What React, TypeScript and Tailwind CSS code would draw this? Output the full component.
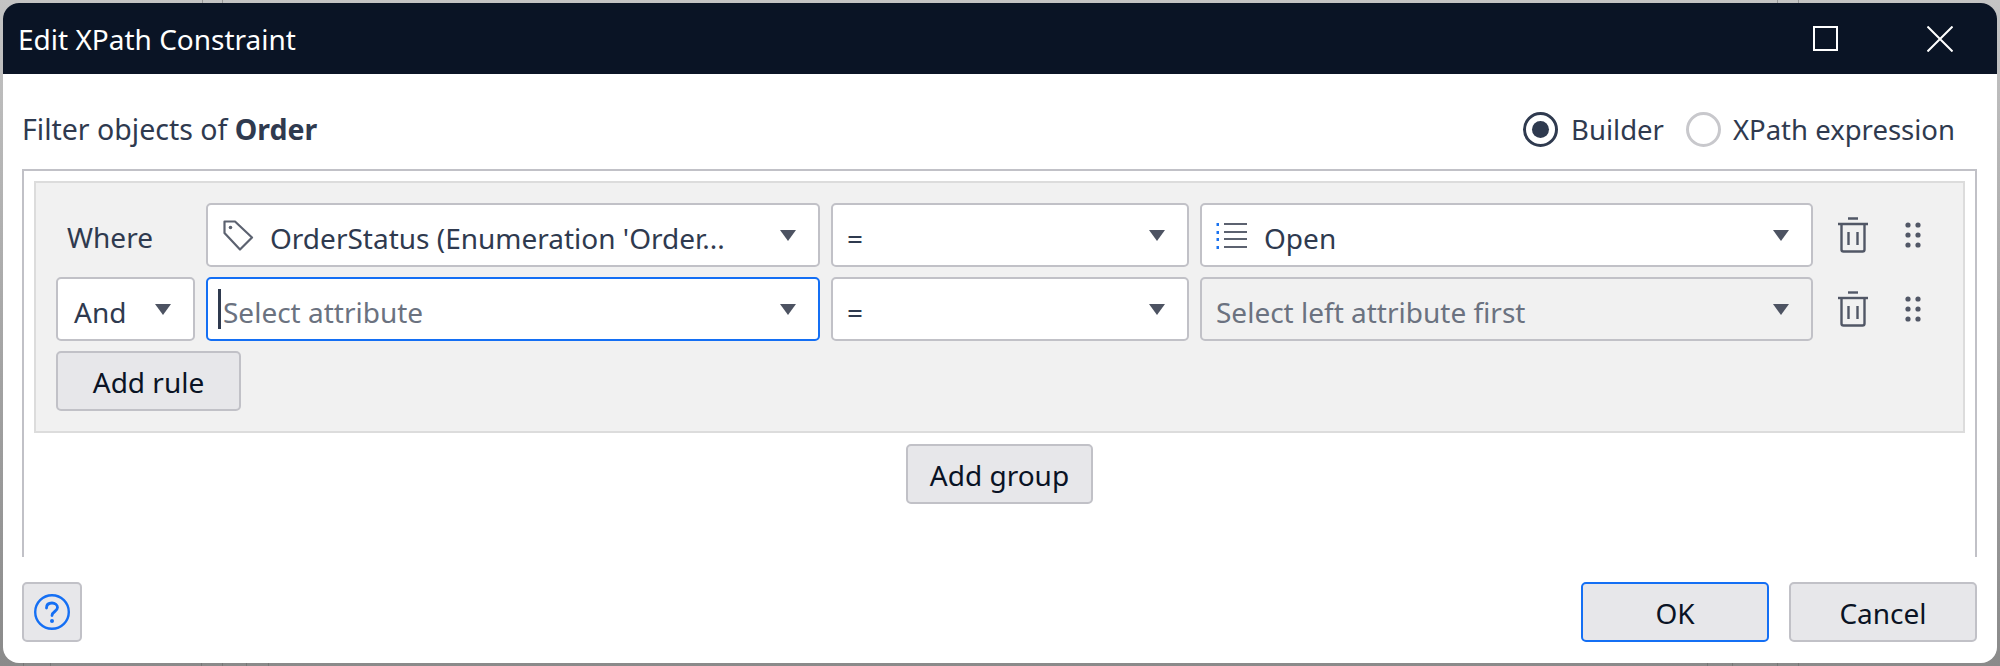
import type { ReactNode } from 'react';

const TOP_TICKS = [202, 222, 1777, 1798];
const BOTTOM_TICKS = [23, 50, 201, 222, 246, 268, 1707, 1732, 1777, 1798];

function Caret() {
    return (
        <svg width="16" height="11" viewBox="0 0 16 11" className="shrink-0">
            <path d="M0 0H16L8 11Z" fill="#4d5362" />
        </svg>
    );
}

function TagIcon() {
    return (
        <svg width="32" height="32" viewBox="0 0 32 32" fill="none" stroke="#5c6270" strokeWidth="2.2" className="shrink-0">
            <path d="M2.5 2.5H13L30 18.5L18 30.5L2.5 14Z" strokeLinejoin="round" />
            <circle cx="8.5" cy="8.5" r="1.8" fill="#5c6270" stroke="none" />
        </svg>
    );
}

function ListIcon() {
    return (
        <svg width="32" height="28" viewBox="0 0 32 28" className="shrink-0">
            <g fill="#1a73f0">
                <rect x="0.5" y="2" width="2.5" height="3" />
                <rect x="0.5" y="10" width="2.5" height="3" />
                <rect x="0.5" y="17" width="2.5" height="3" />
                <rect x="0.5" y="25" width="2.5" height="3" />
            </g>
            <g fill="#5c6270">
                <rect x="8" y="2" width="23" height="2" />
                <rect x="8" y="10" width="23" height="2" />
                <rect x="8" y="17" width="23" height="2" />
                <rect x="8" y="25" width="23" height="2" />
            </g>
        </svg>
    );
}

function TrashIcon() {
    return (
        <svg width="30" height="36" viewBox="0 0 30 36" fill="none" stroke="#515766" strokeWidth="2.4" className="shrink-0">
            <path d="M10 1.5H20" />
            <path d="M0 7H30" />
            <path d="M3.5 7V32.5Q3.5 34.5 5.5 34.5H24.5Q26.5 34.5 26.5 32.5V7" />
            <path d="M10.5 15V28M19.5 15V28" />
        </svg>
    );
}

function GripIcon() {
    return (
        <svg width="16" height="26" viewBox="0 0 16 26" fill="#515766" className="shrink-0">
            <circle cx="3" cy="3" r="2.6" />
            <circle cx="13" cy="3" r="2.6" />
            <circle cx="3" cy="13" r="2.6" />
            <circle cx="13" cy="13" r="2.6" />
            <circle cx="3" cy="23" r="2.6" />
            <circle cx="13" cy="23" r="2.6" />
        </svg>
    );
}

function Select({ width, children, variant = 'default' }: { width: string; children: ReactNode; variant?: 'default' | 'focus' | 'disabled' }) {
    const tone =
        variant === 'focus'
            ? 'border-[#146ff4] bg-white'
            : variant === 'disabled'
              ? 'border-[#c1c1c7] bg-[#f1f1f1]'
              : 'border-[#c1c1c7] bg-white';
    return (
        <div className={`${width} ${tone} flex h-[64px] shrink-0 items-center justify-between rounded-[5px] border-2 pr-[22px]`}>
            <div className="flex min-w-0 items-center">{children}</div>
            <Caret />
        </div>
    );
}

function Button({ width, children, focus }: { width: string; children: ReactNode; focus?: boolean }) {
    return (
        <button className={`${width} ${focus ? 'border-[#146ff4]' : 'border-[#c1c1c7]'} flex h-[60px] shrink-0 items-center justify-center rounded-[5px] border-2 bg-[#e7e7ea] pt-[2px] text-[#0a1325]`}>
            {children}
        </button>
    );
}

function RowActions() {
    return (
        <div className="ml-[14px] flex items-center gap-[37px]">
            <TrashIcon />
            <GripIcon />
        </div>
    );
}

export default function App() {
    return (
        <div className="relative h-[666px] w-[2000px] overflow-hidden bg-linear-to-b from-[#c4c4c4] to-[#8a8a8a] p-[3px] font-['Noto_Sans','Open_Sans',sans-serif] text-[28px] text-[#2f3a4f]">
            {TOP_TICKS.map((x) => (
                <div key={x} className="absolute top-0 h-[3px] w-px bg-[#999999]" style={{ left: x }} />
            ))}
            {BOTTOM_TICKS.map((x) => (
                <div key={x} className="absolute bottom-0 h-[3px] w-px bg-[#777777]" style={{ left: x }} />
            ))}
            <div className="relative flex h-[660px] flex-col overflow-hidden rounded-[16px] bg-white">
                <header className="flex h-[71px] shrink-0 items-center justify-between bg-[#0a1425] pl-[15px] pr-[44px] text-white">
                    <span>Edit XPath Constraint</span>
                    <div className="flex items-center gap-[89px]">
                        <div className="h-[25px] w-[25px] border-2 border-white" />
                        <svg width="26" height="26" viewBox="0 0 26 26" stroke="white" strokeWidth="2">
                            <path d="M0.5 0.5L25.5 25.5M25.5 0.5L0.5 25.5" />
                        </svg>
                    </div>
                </header>

                <div className="flex min-h-0 flex-1 flex-col pl-[19px] pr-[20px]">
                    <div className="flex h-[95px] shrink-0 items-center justify-between pr-[22px] pt-[16px]">
                        <div className="text-[28.5px]">
                            Filter objects of <b className="font-bold">Order</b>
                        </div>
                        <div className="flex items-center text-[27.5px]">
                            <span className="flex h-[35px] w-[35px] items-center justify-center rounded-full border-[3px] border-[#2f3a4f]">
                                <span className="h-[17px] w-[17px] rounded-full bg-[#2f3a4f]" />
                            </span>
                            <span className="ml-[13px]">Builder</span>
                            <span className="ml-[22px] h-[35px] w-[35px] rounded-full border-[3px] border-[#c8c8cc]" />
                            <span className="ml-[12px]">XPath expression</span>
                        </div>
                    </div>

                    <div className="h-[388px] shrink-0 border-x-2 border-t-2 border-[#c1c1c7] px-[10px] pt-[10px]">
                        <div className="flex h-[252px] flex-col gap-[10px] border-2 border-[#dcdcdc] bg-[#f1f1f1] px-[20px] pt-[20px]">
                            <div className="flex items-center gap-[11px]">
                                <div className="w-[139px] shrink-0 pl-[11px] pt-[3px]">Where</div>
                                <Select width="w-[614px]">
                                    <span className="ml-[14px]"><TagIcon /></span>
                                    <span className="ml-[16px] truncate pt-[5px]">OrderStatus (Enumeration 'Order...</span>
                                </Select>
                                <Select width="w-[358px]">
                                    <span className="ml-[14px] pt-[5px]">=</span>
                                </Select>
                                <Select width="w-[613px]">
                                    <span className="ml-[14px]"><ListIcon /></span>
                                    <span className="ml-[16px] pt-[5px]">Open</span>
                                </Select>
                                <RowActions />
                            </div>
                            <div className="flex items-center gap-[11px]">
                                <Select width="w-[139px]">
                                    <span className="ml-[16px] pt-[5px]">And</span>
                                </Select>
                                <Select width="w-[614px]" variant="focus">
                                    <span className="ml-[10px] h-[40px] w-[3px] bg-[#2f3a4f]" />
                                    <span className="ml-[2px] pt-[5px] text-[#6b7280]">Select attribute</span>
                                </Select>
                                <Select width="w-[358px]">
                                    <span className="ml-[14px] pt-[5px]">=</span>
                                </Select>
                                <Select width="w-[613px]" variant="disabled">
                                    <span className="ml-[14px] pt-[5px] text-[#6b7280]">Select left attribute first</span>
                                </Select>
                                <RowActions />
                            </div>
                            <Button width="w-[185px]">Add rule</Button>
                        </div>
                        <div className="mt-[11px] flex justify-center">
                            <Button width="w-[187px]">Add group</Button>
                        </div>
                    </div>

                    <div className="flex flex-1 items-start justify-between pt-[25px]">
                        <button className="flex h-[60px] w-[60px] items-center justify-center rounded-[5px] border-2 border-[#c1c1c7] bg-[#e7e7ea]">
                            <svg width="36" height="36" viewBox="0 0 36 36" fill="none" stroke="#146ff4" strokeWidth="2.4">
                                <circle cx="18" cy="18" r="16.8" />
                                <path d="M12.5 14C12.5 10.5 15 9 18 9C21 9 23.5 10.8 23.5 13.5C23.5 17.5 18 17.5 18 21.5" strokeWidth="2.8" strokeLinecap="round" />
                                <circle cx="18" cy="27" r="2" fill="#146ff4" stroke="none" />
                            </svg>
                        </button>
                        <div className="flex gap-[20px]">
                            <Button width="w-[188px]" focus>OK</Button>
                            <Button width="w-[188px]">Cancel</Button>
                        </div>
                    </div>
                </div>
            </div>
        </div>
    );
}
